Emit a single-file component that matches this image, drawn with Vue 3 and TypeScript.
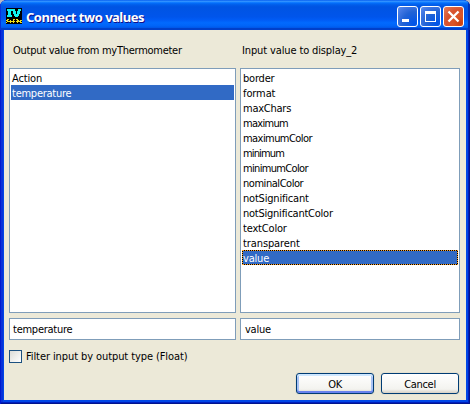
<script setup lang="ts">
import { ref } from 'vue'

interface Item {
  name: string
  spacing: number
}

const outputs: Item[] = [
  { name: 'Action', spacing: -0.15 },
  { name: 'temperature', spacing: -0.25 },
]
const inputs: Item[] = [
  { name: 'border', spacing: -0.2 },
  { name: 'format', spacing: -0.1 },
  { name: 'maxChars', spacing: -0.25 },
  { name: 'maximum', spacing: -0.7 },
  { name: 'maximumColor', spacing: -0.56 },
  { name: 'minimum', spacing: -0.85 },
  { name: 'minimumColor', spacing: -0.66 },
  { name: 'nominalColor', spacing: -0.45 },
  { name: 'notSignificant', spacing: -0.2 },
  { name: 'notSignificantColor', spacing: -0.24 },
  { name: 'textColor', spacing: -0.18 },
  { name: 'transparent', spacing: -0.1 },
  { name: 'value', spacing: -0.2 },
]
const output = ref('temperature')
const input = ref('value')
const filtered = ref(false)
</script>

<template>
  <div class="window">
    <header class="titlebar">
      <svg class="logo" width="16" height="16" viewBox="0 0 16 16" shape-rendering="crispEdges">
        <rect width="16" height="16" fill="#000" />
        <path d="M1 1h5v2H5v4h1v2H1V7h1V3H1zM6 1h3v2h1v3h1V3h1V1h3v2h-1v3h-1v2h-1v1h-3V8H8V6H7V3H6z" fill="#10f4f0" />
        <path d="M1 11h2v1H2v1h1v1H1v1H0v-1h1v-1H0v-1h1zM4 12h1v1h1v1H5v1H4v-1H3v-1h1zM7 11h2v1H8v1h1v1H8v1H7v-1H6v-1h1zM10 11h2v1h1v2h-1v1h-1v-1h-1v-1h1v-1h-1zM14 12h2v1h-1v1h1v1h-2v-1h-1v-1h1z" fill="#f0df18" />
      </svg>
      <h1 class="title">Connect two values</h1>
      <div class="controls">
        <span class="control"><svg width="21" height="21" viewBox="0 0 21 21"><path d="M5 13h7v3H5z" fill="#fff" /></svg></span>
        <span class="control"><svg width="21" height="21" viewBox="0 0 21 21" shape-rendering="crispEdges"><path d="M5 5h11v11H5zM6 8v7h9V8z" fill="#fff" fill-rule="evenodd" /></svg></span>
        <span class="control close"><svg width="21" height="21" viewBox="0 0 21 21"><path d="M5.5 5.5l10 10M15.5 5.5l-10 10" stroke="#fff" stroke-width="2.3" /></svg></span>
      </div>
    </header>
    <main class="body">
      <div class="columns">
        <div class="label">Output value from myThermometer</div>
        <div class="label second">Input value to display_2</div>
        <ul class="list">
          <li v-for="item in outputs" :key="item.name" :class="{ selected: item.name === output }" :style="{ letterSpacing: item.spacing + 'px' }" @click="output = item.name">{{ item.name }}</li>
        </ul>
        <ul class="list inputs">
          <li v-for="item in inputs" :key="item.name" :class="{ selected: item.name === input, focused: item.name === input }" :style="{ letterSpacing: item.spacing + 'px' }" @click="input = item.name">{{ item.name }}</li>
        </ul>
        <div class="field">{{ output }}</div>
        <div class="field second">{{ input }}</div>
      </div>
      <div class="filter" @click="filtered = !filtered">
        <span class="box"><svg v-if="filtered" width="11" height="11" viewBox="0 0 11 11"><path d="M2 5l2.5 3L9 3" fill="none" stroke="#21a121" stroke-width="2" /></svg></span>
        <span class="filter-text">Filter input by output type (Float)</span>
      </div>
      <footer class="actions">
        <button class="button default">OK</button>
        <button class="button">Cancel</button>
      </footer>
    </main>
  </div>
</template>

<style>
body { background: #b9b9c4; overflow: hidden; }
</style>

<style scoped>
.window {
  box-sizing: border-box;
  width: 470px;
  height: 404px;
  padding: 0 4px 4px;
  border-radius: 7px 7px 0 0;
  background: #0046e6;
  box-shadow: inset 1px 0 #0019cf, inset -1px 0 #00138c, inset 0 -1px #00138c, inset -2px -2px #001dbe, inset 3px 0 #0831d9;
  font: 11px/15px "DejaVu Sans Condensed", "DejaVu Sans", sans-serif;
  font-stretch: condensed;
  color: #000;
  overflow: hidden;
}
.titlebar {
  box-sizing: border-box;
  height: 30px;
  margin: 0 -4px;
  padding: 6px 6px 0;
  display: flex;
  background: linear-gradient(#0058ee 0, #3593ff 4%, #288eff 6%, #127dff 8%, #036ffc 10%, #0262ee 14%, #0057e5 20%, #0054e3 24%, #0055eb 56%, #005bf5 66%, #026afe 76%, #0064f8 86%, #0058ea 92%, #0040ca 95%, #003ecb 100%);
  box-shadow: inset 1px 0 #0831d9, inset -2px 0 #0030b8;
}
.logo { margin-top: 2px; flex: none; }
.title {
  margin: 2px 0 0 4px;
  flex: 1;
  font: bold 13px/18px "Noto Sans", sans-serif;
  letter-spacing: -0.5px;
  color: #fff;
  text-shadow: 1px 1px #0f1089;
  white-space: nowrap;
}
.controls { display: flex; gap: 2px; }
.control {
  box-sizing: border-box;
  width: 21px;
  height: 21px;
  border: 1px solid #fff;
  border-radius: 3px;
  background: radial-gradient(circle at 85% 85%, #0054e9 0, #2263d5 50%, #4479e4 80%, #5c91ee 100%);
}
.control svg { display: block; margin: -1px; }
.close { background: radial-gradient(circle at 85% 85%, #cc4010 0, #dc5527 30%, #d7522f 60%, #e57e5c 100%); }
.body {
  box-sizing: border-box;
  height: 370px;
  padding: 12px 6px 0 5px;
  background: #ece9d8;
}
.columns {
  display: grid;
  grid-template-columns: 227px 220px;
  grid-template-rows: 21px 245px 22px;
  column-gap: 4px;
  row-gap: 5px;
}
.label { padding: 1px 0 0 4px; letter-spacing: -0.27px; white-space: nowrap; }
.label.second { padding-left: 2px; letter-spacing: -0.13px; }
.list, .field { box-sizing: border-box; border: 1px solid #7f9db9; background: #fff; }
.list { margin: 0; padding: 1px; list-style: none; }
.list li { box-sizing: border-box; height: 15px; padding: 1px 0 0 1px; line-height: 15px; }
.selected { background: #316ac5; color: #fff; }
.focused { box-shadow: inset 0 0 0 1px #000; outline: 1px dotted #ffa229; outline-offset: -1px; }
.field { padding: 3px 0 0 3px; letter-spacing: -0.25px; }
.field.second { padding-left: 4px; }
.filter { display: flex; align-items: center; height: 15px; margin-top: 9px; }
.box {
  box-sizing: border-box;
  width: 13px;
  height: 13px;
  border: 1px solid #1c5180;
  background: linear-gradient(135deg, #dcdcd7, #fff);
}
.box svg { display: block; }
.filter-text { margin-left: 4px; letter-spacing: -0.09px; }
.actions { display: flex; justify-content: flex-end; gap: 7px; margin: 9px 1px 0 0; }
.button {
  box-sizing: border-box;
  width: 78px;
  height: 21px;
  padding: 1px 0 0;
  border: 1px solid #003c74;
  border-radius: 3px;
  background: linear-gradient(#fff, #f3f3ef 80%, #d6d0c5);
  box-shadow: 0 0 0 1px #e5e1d0;
  font: inherit;
  letter-spacing: -0.3px;
  color: #000;
}
.default { box-shadow: 0 0 0 1px #e5e1d0, inset 0 2px #cee7ff, inset 0 -2px #6982ee, inset 2px 0 #a9c3f4, inset -2px 0 #a9c3f4; }
</style>
